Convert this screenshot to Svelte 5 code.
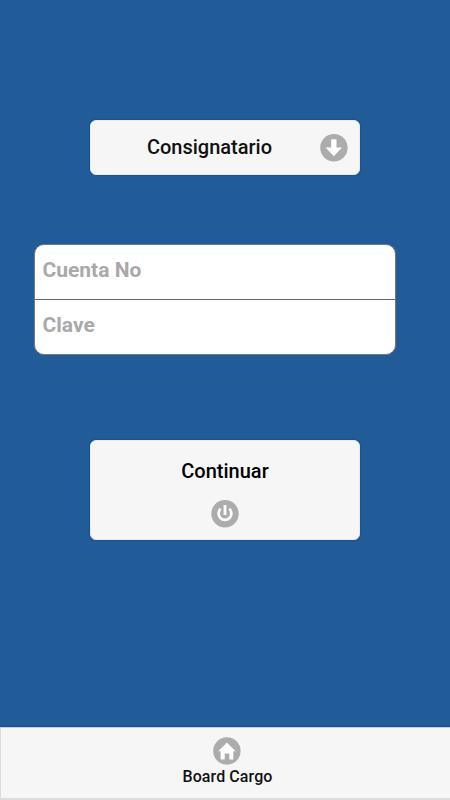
<script lang="ts">
  let account = '';
  let password = '';
</script>

<div class="page">
  <main>
    <button class="btn select" type="button">
      <span class="label">Consignatario</span>
      <svg class="icon" viewBox="0 0 28 28">
        <circle cx="13.9" cy="13.8" r="13.7" fill="#acacac" />
        <path d="M11.2 5.2h5.3v8.2H22L13.8 22.3 5.6 13.4h5.6z" fill="#fff" />
      </svg>
    </button>

    <form class="fields">
      <input type="text" placeholder="Cuenta No" bind:value={account} />
      <input type="password" placeholder="Clave" bind:value={password} />
    </form>

    <button class="btn submit" type="button">
      <span class="label">Continuar</span>
      <svg class="icon" viewBox="0 0 28 28">
        <circle cx="14" cy="13.8" r="13.7" fill="#acacac" />
        <path d="M9.6 8.8a6.4 6.4 0 1 0 8.8 0" fill="none" stroke="#fff" stroke-width="2.7" />
        <path d="M14 5v10" fill="none" stroke="#fff" stroke-width="2.8" />
      </svg>
    </button>
  </main>

  <footer>
    <svg class="icon" viewBox="0 0 28 28">
      <circle cx="13.9" cy="14" r="13.7" fill="#acacac" />
      <path d="M13.9 5.4l8.7 8.9h-2.3v8.1h-4v-6h-4.6v6H7.6v-8.1H5.2z" fill="#fff" />
    </svg>
    <span class="brand">Board Cargo</span>
  </footer>
</div>

<style>
  :global(body) {
    margin: 0;
    background: #215b98;
  }

  .page {
    display: flex;
    flex-direction: column;
    width: 450px;
    height: 800px;
    background: #215b98;
    font-family: Roboto, sans-serif;
    overflow: hidden;
  }

  main {
    flex: 1;
    display: flex;
    flex-direction: column;
    align-items: center;
    padding-top: 120px;
  }

  .btn {
    box-sizing: border-box;
    display: flex;
    align-items: center;
    width: 270px;
    border: 1px solid #e9eaec;
    border-radius: 6px;
    background: #f6f6f6;
    box-shadow: 0 0 2px #00408a;
    font-family: inherit;
    font-size: 20px;
    font-weight: 500;
    line-height: 24px;
    color: #111;
  }

  .icon {
    flex: none;
    display: block;
    width: 28px;
    height: 28px;
  }

  .select {
    height: 55px;
    padding: 0 11px 0 8px;
  }

  .select .label {
    flex: 1;
    text-align: center;
    padding-bottom: 1px;
  }

  .fields {
    box-sizing: border-box;
    width: 362px;
    height: 111px;
    margin: 69px 20px 0 0;
    border: 1px solid #777;
    border-radius: 10px;
    background: #fff;
    overflow: hidden;
  }

  input {
    box-sizing: border-box;
    display: block;
    width: 100%;
    height: 54px;
    padding: 0 7.5px 4px;
    border: 0;
    outline: 0;
    background: transparent;
    font-family: inherit;
    font-size: 21px;
    font-weight: 700;
  }

  input + input {
    height: 55px;
    border-top: 1px solid #666;
  }

  input::placeholder {
    color: #a9a9a9;
    opacity: 1;
  }

  .submit {
    flex-direction: column;
    height: 100px;
    margin-top: 85px;
    padding: 18px 0 0;
    color: #000;
  }

  .submit .icon {
    margin-top: 17px;
  }

  footer {
    box-sizing: border-box;
    display: flex;
    flex-direction: column;
    align-items: center;
    height: 73px;
    padding: 9px 0 0 4px;
    border: solid #dcdcdc;
    border-width: 1px 0 2px 1px;
    border-top-color: #c3cfdd;
    background: #f6f6f6;
    box-shadow: 0 0 2px #00408a;
  }

  footer .icon {
    margin-right: 1px;
  }

  .brand {
    margin-top: 2px;
    font-size: 16px;
    font-weight: 500;
    line-height: 20px;
    letter-spacing: 0.08px;
    color: #111;
  }
</style>
